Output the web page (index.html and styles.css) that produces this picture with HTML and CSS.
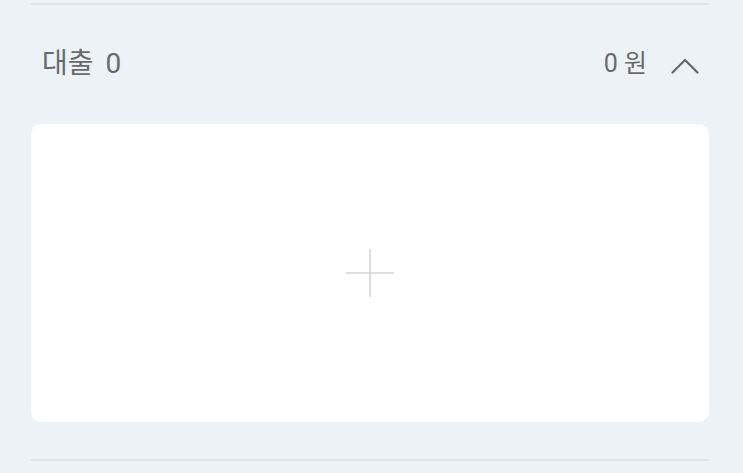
FILE: index.html
```html
<!DOCTYPE html>
<html lang="ko">
<head>
  <meta charset="UTF-8">
  <title>대출</title>
  <link rel="stylesheet" href="styles.css">
</head>
<body>
  <div class="section">
    <div class="divider"></div>
    <div class="section-header">
      <span class="title">대출 0</span>
      <div class="summary">
        <span class="amount">0 원</span>
        <svg class="chevron" width="28" height="16" viewBox="0 0 28 16">
          <path d="M1.5 14.5 L14 2 L26.5 14.5" fill="none" stroke="#666" stroke-width="2.2" stroke-linecap="round" stroke-linejoin="round"/>
        </svg>
      </div>
    </div>
    <div class="card">
      <svg class="plus" width="48" height="48" viewBox="0 0 48 48">
        <path d="M24 0 V48 M0 24 H48" stroke="#d4d4d4" stroke-width="1.6"/>
      </svg>
    </div>
    <div class="divider"></div>
  </div>
</body>
</html>
```

FILE: styles.css
```css
body {
  margin: 0;
  background: #edf2f7;
  font-family: Roboto, "Noto Sans CJK KR", sans-serif;
  color: #6a6a6a;
}
.section {
  padding: 3px 34px 0 31px;
  display: flex;
  flex-direction: column;
}
.divider {
  height: 2px;
  background: #dde3ea;
}
.section-header {
  display: flex;
  align-items: center;
  justify-content: space-between;
  height: 119px;
  padding: 0 10px 2px 11px;
  box-sizing: border-box;
}
.title {
  font-size: 28px;
  line-height: 1;
  word-spacing: 5px;
}
.summary {
  display: flex;
  align-items: center;
  gap: 24px;
}
.amount {
  font-size: 25px;
  line-height: 1;
}
.chevron {
  display: block;
  margin-top: 5px;
}
.card {
  background: #fff;
  border-radius: 10px;
  height: 298px;
  display: flex;
  align-items: center;
  justify-content: center;
  margin-bottom: 37px;
}
.plus {
  display: block;
}
```
